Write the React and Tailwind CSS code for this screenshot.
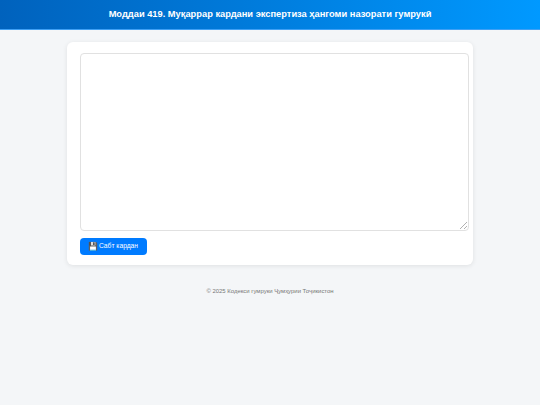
export default function App() {
  return (
    <div className="min-h-[405px] bg-[#f4f6f8] font-['Liberation_Sans',Arial,sans-serif]">
      <header className="h-[30px] pt-px flex items-center justify-center bg-gradient-to-r from-[#0062bd] to-[#0099ff] border-b border-[#3fa0f5]">
        <h1 className="text-[9.3px] font-bold text-white">Моддаи 419. Муқаррар кардани экспертиза ҳангоми назорати гумрукӣ</h1>
      </header>

      <main className="w-[406px] mx-auto mt-3 bg-white rounded-[6px] shadow-[0_1px_5px_rgba(0,0,0,0.09)] pt-[11px] pb-[10px] pl-[13px] pr-1">
        <textarea className="block w-[389px] h-[178px] border border-[#c4c4c4] rounded-[4px] bg-white outline-none opacity-50" />
        <button className="mt-[7px] h-[17px] w-[67px] flex items-center justify-center gap-[1px] pr-[1px] bg-[#007bff] text-white text-[6.7px] rounded-[4px]">
          <span className="text-[8px] leading-none">💾</span>
          <span>Сабт кардан</span>
        </button>
      </main>

      <footer className="mt-[22px] text-center text-[5.95px] text-[#777777]">
        © 2025 Кодекси гумруки Ҷумҳурии Тоҷикистон
      </footer>
    </div>
  );
}
